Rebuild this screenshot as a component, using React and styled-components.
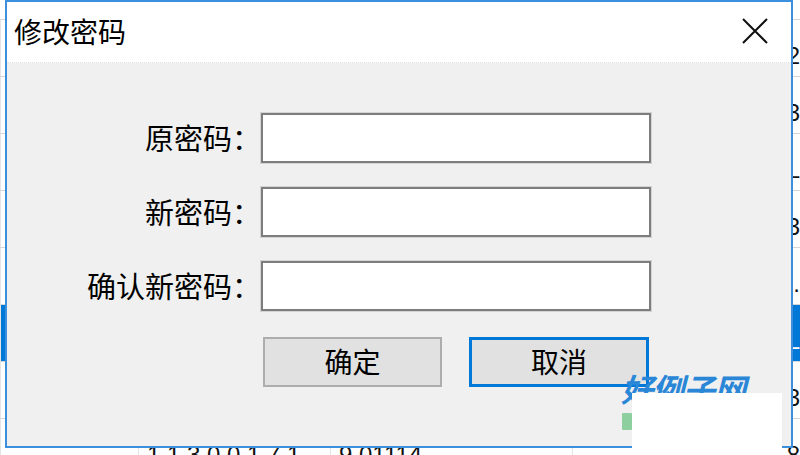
import React from "react";
import styled, { createGlobalStyle } from "styled-components";

const Global = createGlobalStyle`
  html, body { margin: 0; padding: 0; background: #ffffff; }
  body { width: 800px; height: 455px; overflow: hidden; font-family: "Noto Sans CJK SC", "Noto Sans", sans-serif; }
  * { box-sizing: border-box; }
`;

const Page = styled.div`
  position: relative;
  width: 800px;
  height: 455px;
  overflow: hidden;
  background: #ffffff;
`;

/* background list behind the dialog */
const Table = styled.div`
  display: flex;
  flex-direction: column;
  padding-top: 19px;
`;

const Row = styled.div`
  display: grid;
  grid-template-columns: 138px 192px 242px 228px;
  height: 57px;
  border-top: 1px solid #d6d6d6;
  background: ${(p) => (p.$selected ? "#0078d7" : "#ffffff")};
  color: ${(p) => (p.$selected ? "#ffffff" : "#111111")};
  font-family: "Liberation Sans", "Noto Sans CJK SC", sans-serif;
  font-size: 24px;
`;

const Cell = styled.div`
  display: flex;
  align-items: center;
  padding: 16px 0 0 8px;
  white-space: nowrap;
  overflow: hidden;
  border-left: 1px solid #e4e4e4;
  justify-content: ${(p) => (p.$right ? "flex-end" : "flex-start")};
`;

/* dialog window */
const Dialog = styled.div`
  position: absolute;
  left: 5px;
  top: 0;
  width: 788px;
  height: 448px;
  border: 2px solid #3b8fdc;
  background: #f0f0f0;
  display: flex;
  flex-direction: column;
`;

const TitleBar = styled.div`
  height: 61px;
  background: #ffffff;
  border-bottom: 1px dotted #e2e2e2;
  display: flex;
  align-items: center;
  justify-content: space-between;
  padding: 0 22px 0 7px;
`;

const Title = styled.div`
  font-size: 28px;
  color: #000000;
  line-height: 1;
  margin-top: -2px;
`;

const CloseButton = styled.div`
  width: 28px;
  height: 28px;
  display: flex;
  align-items: center;
  justify-content: center;
  margin-top: -2px;
`;

const Body = styled.div`
  flex: 1;
  padding-top: 50px;
`;

const Form = styled.div`
  display: grid;
  grid-template-columns: 254px 390px;
  row-gap: 24px;
  grid-auto-rows: 50px;
`;

const Label = styled.label`
  display: flex;
  align-items: center;
  justify-content: flex-end;
  font-size: 29px;
  color: #000000;
  white-space: nowrap;
  padding-bottom: 3px;
`;

const Input = styled.input`
  width: 390px;
  height: 50px;
  border: 2px solid #7d7d7d;
  box-shadow: inset 0 0 0 1px #ffffff, 0 0 0 1px #d4d4d4;
  background: #ffffff;
  outline: none;
  font-size: 24px;
  padding: 0 6px;
`;

const Buttons = styled.div`
  grid-column: 2;
  display: flex;
  gap: 27px;
  padding-left: 2px;
  margin-top: 2px;
`;

const Button = styled.button`
  width: ${(p) => (p.$primary ? "180px" : "179px")};
  height: 50px;
  background: #e1e1e1;
  border: ${(p) => (p.$primary ? "3px solid #0078d7" : "2px solid #adadad")};
  font-family: "Noto Sans CJK SC", sans-serif;
  font-size: 28px;
  color: #000000;
  display: flex;
  align-items: center;
  justify-content: center;
  padding: 0 0 3px 0;
  cursor: default;
`;

/* watermark overlay */
const Watermark = styled.div`
  position: absolute;
  left: 621px;
  top: 372px;
  font-size: 32px;
  font-weight: 700;
  font-style: italic;
  letter-spacing: -1px;
  color: #2a86d6;
  line-height: 1;
  white-space: nowrap;
`;

const Badge = styled.div`
  position: absolute;
  left: 622px;
  top: 413px;
  width: 10px;
  height: 17px;
  background: #8ecf9f;
  border-radius: 1px;
`;

const Cover = styled.div`
  position: absolute;
  left: 632px;
  top: 393px;
  width: 150px;
  height: 57px;
  background: #ffffff;
`;

const rows = [
  ["", "1.1.3.0.0.1.7.1", "9 01114", "2"],
  ["", "1.1.3.0.0.1.7.1", "9 01114", "3"],
  ["", "1.1.3.0.0.1.7.1", "9 01114", "L"],
  ["", "1.1.3.0.0.1.7.1", "9 01114", "3"],
  ["", "1.1.3.0.0.1.7.1", "9 01114", "."],
  ["", "1.1.3.0.0.1.7.1", "9 01114", "L"],
  ["", "1.1.3.0.0.1.7.1", "9 01114", "3"],
  ["", "1.1.3.0.0.1.7.1", "9 01114", "8"],
];

export default function App() {
  return (
    <Page>
      <Global />
      <Table>
        {rows.map((r, i) => (
          <Row key={i} $selected={i === 5}>
            <Cell>{r[0]}</Cell>
            <Cell>{r[1]}</Cell>
            <Cell>{r[2]}</Cell>
            <Cell $right>{r[3]}</Cell>
          </Row>
        ))}
      </Table>

      <Dialog>
        <TitleBar>
          <Title>修改密码</Title>
          <CloseButton>
            <svg width="26" height="26" viewBox="0 0 26 26">
              <path d="M1 1 L25 25 M25 1 L1 25" stroke="#111111" strokeWidth="2" fill="none" />
            </svg>
          </CloseButton>
        </TitleBar>
        <Body>
          <Form>
            <Label>原密码：</Label>
            <Input type="password" />
            <Label>新密码：</Label>
            <Input type="password" />
            <Label>确认新密码：</Label>
            <Input type="password" />
            <Buttons>
              <Button>确定</Button>
              <Button $primary>取消</Button>
            </Buttons>
          </Form>
        </Body>
      </Dialog>

      <Watermark>好例子网</Watermark>
      <Badge />
      <Cover />
    </Page>
  );
}
